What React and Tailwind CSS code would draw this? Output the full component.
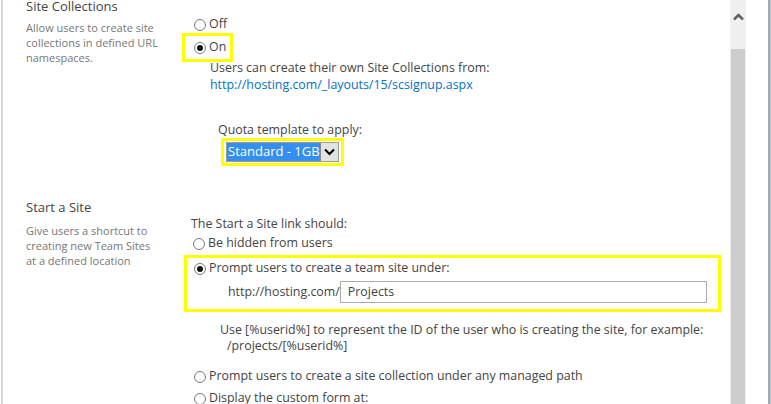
function Radio({ checked }) {
  return (
    <svg width="12" height="12" viewBox="0 0 12 12" className="shrink-0">
      <circle cx="6" cy="6" r="5.5" fill="#fff" stroke="#7a7a7a" strokeWidth="1" />
      {checked && <circle cx="6" cy="6" r="3" fill="#111" />}
    </svg>
  )
}

function Option({ checked, label, className = "" }) {
  return (
    <div className={`flex h-[17px] items-center gap-[3px] ${className}`}>
      <Radio checked={checked} />
      <span>{label}</span>
    </div>
  )
}

function SectionLabel({ title, lines, headClass = "", descClass = "" }) {
  return (
    <div className="w-[179px] shrink-0 pl-[23px]">
      <div className={`text-[13px] leading-[16px] text-[#444] ${headClass}`}>{title}</div>
      <div className={`text-[11px] leading-[15px] text-[#777] ${descClass}`}>
        {lines.map((l) => (
          <div key={l}>{l}</div>
        ))}
      </div>
    </div>
  )
}

export default function App() {
  return (
    <div
      className="flex h-[404px] w-[771px] overflow-hidden bg-white text-[12.4px] text-[#444]"
      style={{ fontFamily: '"Open Sans", "Noto Sans", sans-serif' }}
    >
      <div className="ml-[1px] w-[2px] shrink-0 bg-[#d6d6d6]" />

      <main className="flex-1">
        {/* Site Collections */}
        <div className="flex">
          <SectionLabel
            title="Site Collections"
            lines={["Allow users to create site", "collections in defined URL", "namespaces."]}
            headClass="-mt-[2px]"
            descClass="mt-[6px]"
          />
          <div className="flex flex-col items-start">
            <Option label="Off" className="ml-[12px] mt-[16px]" />
            <div className="flex h-[29px] items-center border-[3px] border-[#ffff00] pl-[9px] pr-[4px]">
              <Option checked label="On" />
            </div>
            <div className="-mt-[3px] ml-[28px] leading-[17px]">
              <div>Users can create their own Site Collections from:</div>
              <a className="text-[#0072c6]">http://hosting.com/_layouts/15/scsignup.aspx</a>
            </div>
            <div className="ml-[36px] mt-[29px] leading-[16px]">Quota template to apply:</div>
            <div className="ml-[39px] flex h-[28px] w-[123px] items-center border-[3px] border-[#ffff00] pl-[2px]">
              <div className="flex h-[20px] w-[113px] items-stretch border border-[#9a9a9a] bg-white">
                <span className="flex flex-1 items-center bg-[#3390f0] pl-[1px] text-[13px] text-white">
                  Standard - 1GB
                </span>
                <span className="flex w-[18px] items-center justify-center border-l border-[#8a8a8a] bg-[#e3e3e3]">
                  <svg width="11" height="8" viewBox="0 0 11 8">
                    <path d="M1 1.5 L5.5 6 L10 1.5" fill="none" stroke="#000" strokeWidth="2" />
                  </svg>
                </span>
              </div>
            </div>
          </div>
        </div>

        {/* Start a Site */}
        <div className="mt-[29px] flex">
          <SectionLabel
            title="Start a Site"
            lines={["Give users a shortcut to", "creating new Team Sites", "at a defined location"]}
            headClass="mt-[4px]"
            descClass="mt-[8px]"
          />
          <div className="flex flex-col items-start">
            <div className="ml-[9px] mt-[21px] leading-[16px]">The Start a Site link should:</div>
            <Option label="Be hidden from users" className="ml-[11px] mt-[3px]" />
            <div className="ml-[2px] mt-[3px] w-[537px] border-[3px] border-[#ffff00] pb-[6px] pl-[7px] pr-[11px] pt-[2px]">
              <Option checked label="Prompt users to create a team site under:" />
              <div className="mt-[4px] flex items-center pl-[34px]">
                <span>http://hosting.com/</span>
                <div className="flex h-[22px] flex-1 items-center border border-[#ababab] pl-[7px]">Projects</div>
              </div>
            </div>
            <div className="ml-[38px] mt-[10px] leading-[16px]">
              Use [%userid%] to represent the ID of the user who is creating the site, for example:
            </div>
            <div className="ml-[45px] leading-[16px]">/projects/[%userid%]</div>
            <Option label="Prompt users to create a site collection under any managed path" className="ml-[12px] mt-[14px]" />
            <Option label="Display the custom form at:" className="ml-[12px] mt-[5px]" />
          </div>
        </div>
      </main>

      {/* scrollbar */}
      <div className="flex w-[16px] shrink-0 flex-col bg-[#f0f0f0]">
        <div className="flex h-[49px] items-start justify-center pt-[13px]">
          <svg width="11" height="8" viewBox="0 0 11 8">
            <path d="M1 6.5 L5.5 2 L10 6.5" fill="none" stroke="#606060" strokeWidth="2.5" />
          </svg>
        </div>
        <div className="mx-[1px] flex-1 bg-[#cdcdcd]" />
      </div>
      <div className="w-[22px] shrink-0 bg-white" />
      <div className="w-[3px] shrink-0 border-l-2 border-[#a8a8a8] bg-[#b6c3d0]" />
    </div>
  )
}
